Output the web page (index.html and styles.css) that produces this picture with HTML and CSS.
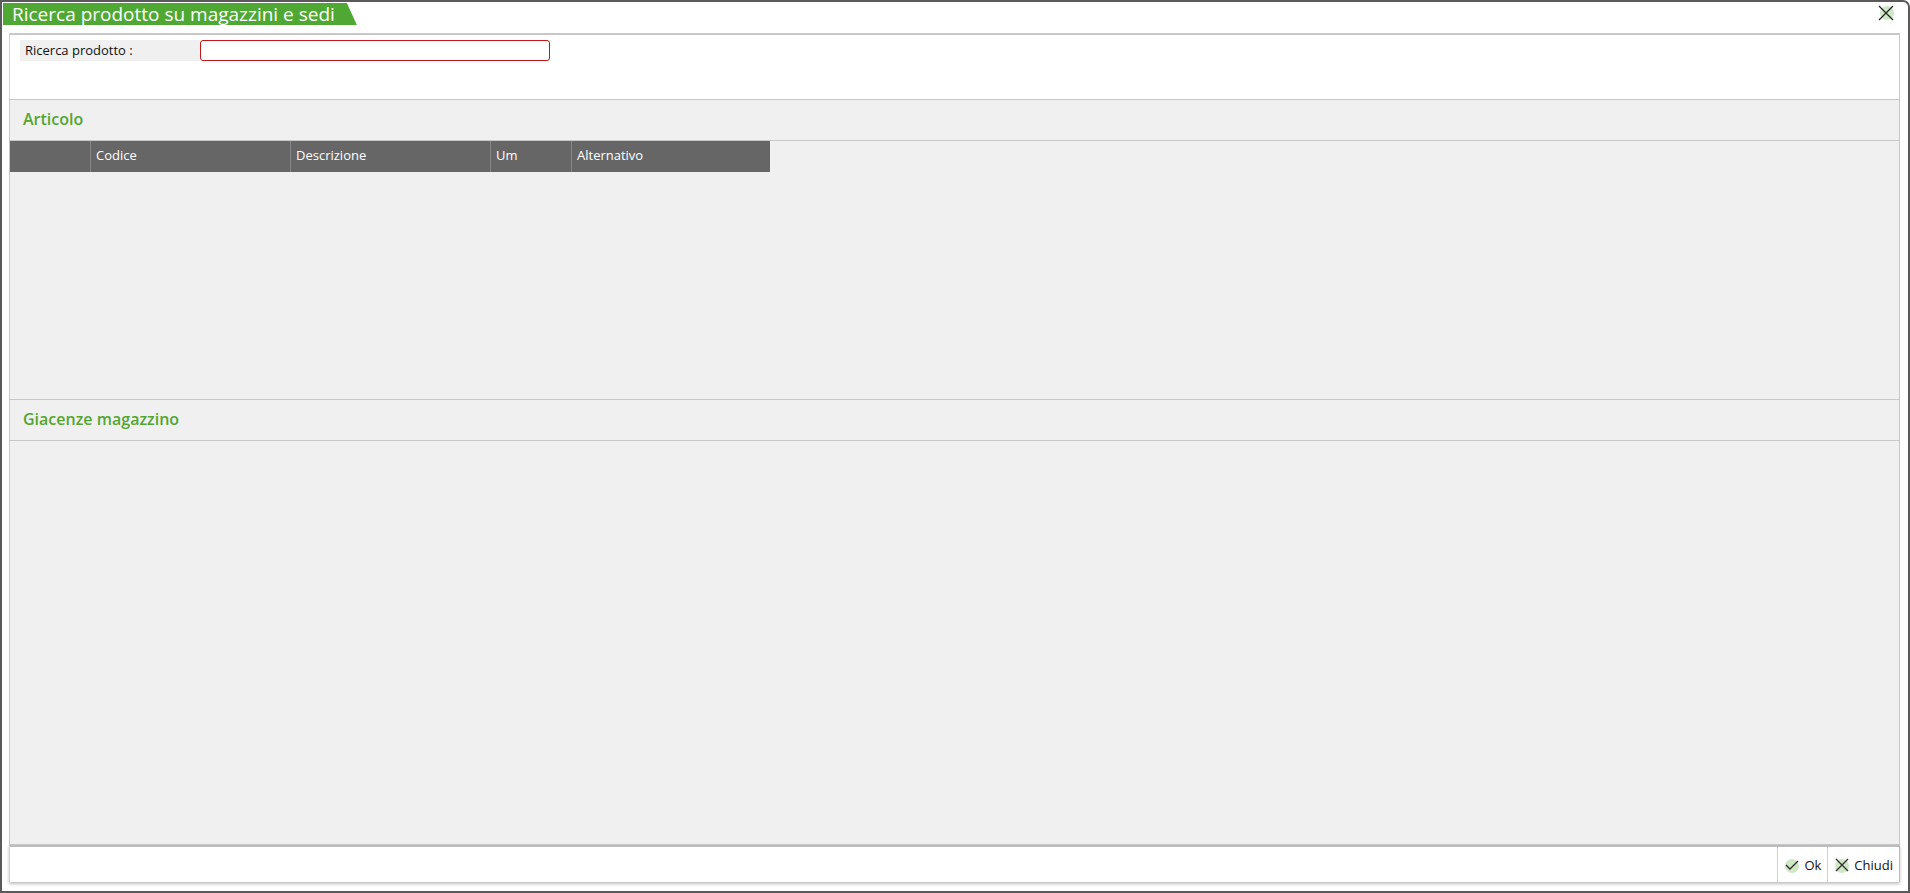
FILE: index.html
```html
<!DOCTYPE html>
<html lang="it">
<head>
    <meta charset="UTF-8">
    <title>Ricerca prodotto su magazzini e sedi</title>
    <link rel="stylesheet" href="styles.css">
</head>
<body>
<div class="window">
    <div class="titlebar">
        <div class="title-tab">Ricerca prodotto su magazzini e sedi</div>
        <div class="close-btn">
            <svg width="18" height="18" viewBox="0 0 18 18">
                <circle cx="10" cy="9" r="7" fill="#cfe8c6"/>
                <path d="M2 2 L16 16 M16 2 L2 16" stroke="#222" stroke-width="1.3"/>
            </svg>
        </div>
    </div>

    <div class="content">
        <div class="search-panel">
            <div class="search-row">
                <label class="search-label" for="prodotto">Ricerca prodotto :</label>
                <input type="text" id="prodotto" class="search-input">
            </div>
        </div>

        <div class="section articolo">
            <div class="section-head">Articolo</div>
            <div class="grid-head">
                <div class="col col-sel"></div>
                <div class="col col-codice">Codice</div>
                <div class="col col-desc">Descrizione</div>
                <div class="col col-um">Um</div>
                <div class="col col-alt">Alternativo</div>
            </div>
        </div>

        <div class="section giacenze">
            <div class="section-head">Giacenze magazzino</div>
        </div>

        <div class="footer">
            <div class="footer-btn">
                <svg width="16" height="16" viewBox="0 0 16 16">
                    <circle cx="8" cy="9" r="7" fill="#cfe8c6"/>
                    <path d="M2 8 L6 12 L14 4" stroke="#333" stroke-width="1.4" fill="none"/>
                </svg>
                Ok
            </div>
            <div class="footer-btn">
                <svg width="16" height="16" viewBox="0 0 16 16">
                    <circle cx="8" cy="9" r="7" fill="#cfe8c6"/>
                    <path d="M2 2 L14 14 M14 2 L2 14" stroke="#333" stroke-width="1.4"/>
                </svg>
                Chiudi
            </div>
        </div>
    </div>
</div>
</body>
</html>
```

FILE: styles.css
```css
body {
    margin: 0;
    padding: 0;
    font-family: "Open Sans", "Noto Sans", sans-serif;
    background: #ffffff;
}

.window {
    width: 1910px;
    height: 893px;
    box-sizing: border-box;
    border: 2px solid #5a5a5a;
    border-top-right-radius: 7px;
    display: flex;
    flex-direction: column;
    background: #ffffff;
}

.titlebar {
    height: 31px;
    display: flex;
    justify-content: space-between;
    align-items: flex-start;
}

.title-tab {
    margin: 1px 0 0 1px;
    height: 22px;
    padding: 0 22px 0 9px;
    background: #4fa834;
    color: #ffffff;
    font-size: 19px;
    font-weight: 500;
    line-height: 22px;
    clip-path: polygon(0 0, calc(100% - 10px) 0, 100% 100%, 0 100%);
}

.close-btn {
    margin: 2px 13px 0 0;
    height: 18px;
}

.content {
    flex: 1;
    display: flex;
    flex-direction: column;
    padding: 0 8px 9px 7px;
}

.search-panel {
    height: 66px;
    border-top: 2px solid #c8c8c8;
    border-left: 1px solid #d4d4d4;
    border-right: 1px solid #c8c8c8;
    box-sizing: border-box;
    padding: 5px 0 0 10px;
}

.search-row {
    display: flex;
    height: 21px;
}

.search-label {
    width: 175px;
    background: #f0f0f0;
    font-size: 13px;
    line-height: 21px;
    padding-left: 5px;
    color: #111;
}

.search-input {
    width: 350px;
    height: 21px;
    box-sizing: border-box;
    border: 1px solid #c01818;
    border-radius: 3px;
    margin: 0;
    padding: 0 4px;
    outline: none;
}

.section {
    background: #f0f0f0;
    border: 1px solid #c8c8c8;
    border-top: none;
}

.articolo {
    height: 299px;
    border-top: 1px solid #c8c8c8;
}

.giacenze {
    flex: 1;
}

.section-head {
    height: 41px;
    box-sizing: border-box;
    border-bottom: 1px solid #c8c8c8;
    padding-left: 13px;
    color: #55a530;
    font-size: 16px;
    font-weight: 600;
    line-height: 39px;
}

.grid-head {
    display: flex;
    width: 760px;
    height: 31px;
    background: #666666;
}

.col {
    color: #ffffff;
    font-size: 13px;
    line-height: 29px;
    padding-left: 5px;
    border-right: 1px solid #888888;
    box-sizing: border-box;
}

.col-sel { width: 81px; }
.col-codice { width: 200px; }
.col-desc { width: 200px; }
.col-um { width: 81px; }
.col-alt { width: 198px; border-right: none; }

.footer {
    height: 37px;
    border-top: 2px solid #bcbcbc;
    border-left: 1px solid #d0d0d0;
    border-right: 1px solid #bcbcbc;
    box-sizing: border-box;
    box-shadow: 0 2px 3px rgba(0, 0, 0, 0.25);
    display: flex;
    justify-content: flex-end;
}

.footer-btn {
    display: flex;
    align-items: center;
    gap: 4px;
    padding: 0 6px;
    border-left: 1px solid #d0d0d0;
    font-size: 13px;
    color: #111;
}
```
